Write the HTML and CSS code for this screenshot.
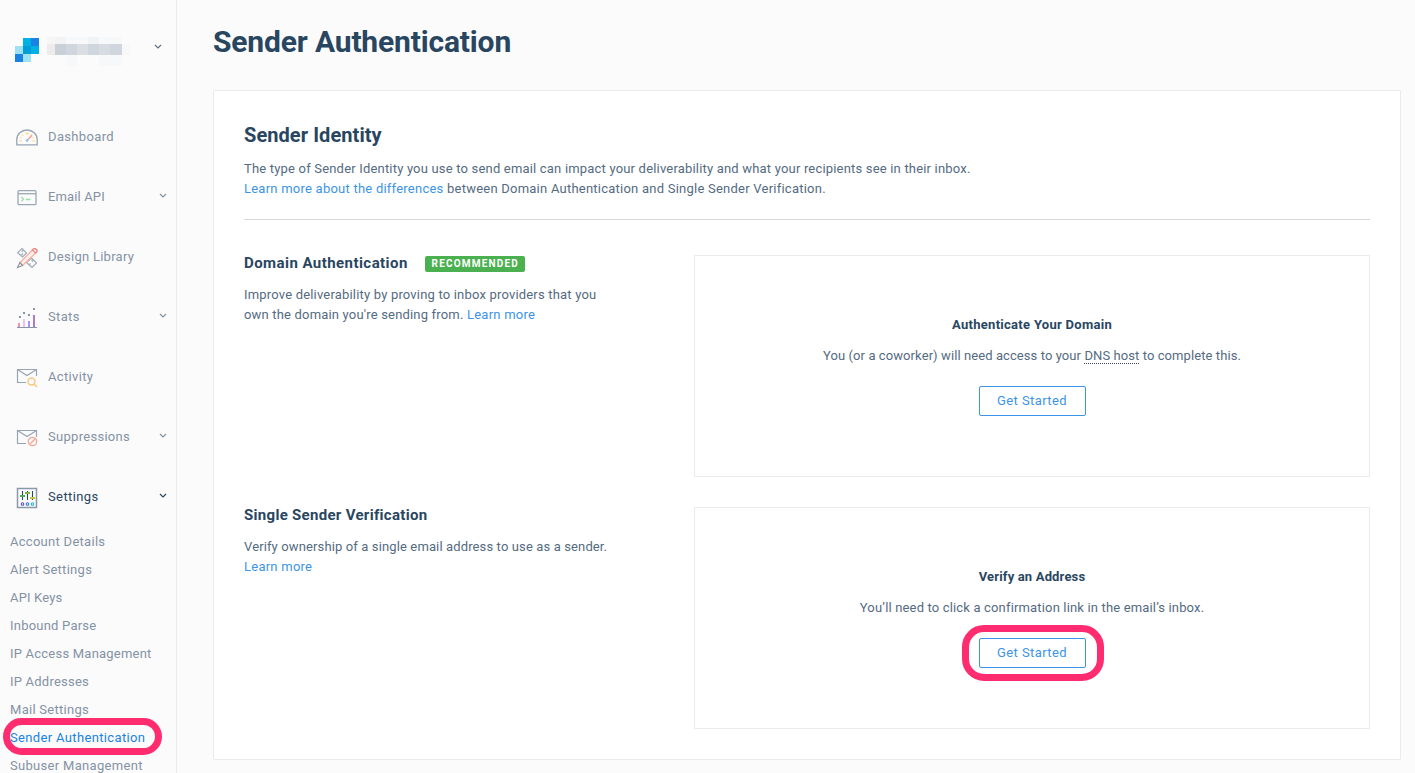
FILE: index.html
```html
<!DOCTYPE html>
<html lang="en">
<head>
<meta charset="utf-8">
<title>Sender Authentication</title>
<link rel="stylesheet" href="styles.css">
</head>
<body>
<div class="app">
  <aside class="sidebar">
    <div class="account">
      <svg class="logo" width="24" height="24" viewBox="0 0 24 24" shape-rendering="crispEdges">
        <path fill="#00b2e3" d="M8 0h8v8H8zM16 8h8v8h-8z"/><path fill="#1a82e2" d="M16 0h8v8h-8zM0 16h8v8H0z"/><path fill="#9de1f3" d="M0 8h8v8H0zM8 16h8v8H8z"/><path fill="#009dd9" d="M8 8h8v8H8z"/>
      </svg>
      <svg class="account-name" width="84" height="29" viewBox="0 0 84 29" shape-rendering="crispEdges">
        <path fill="#f8f5f6" d="M0 0h8v7H0z"/><path fill="#f2f3f5" d="M8 0h11v7H8zM41 0h11v7H41z"/><path fill="#f7f8f9" d="M19 0h22v7H19zM52 0h23v7H52zM19 18h11v11H19zM52 18h23v11H52zM75 7h9v11h-9z"/>
        <path fill="#efebed" d="M0 7h8v11H0z"/><path fill="#c9d0d8" d="M8 7h11v11H8z"/><path fill="#d0d6dd" d="M19 7h11v11H19zM41 7h11v11H41zM63 7h12v11H63z"/><path fill="#dbdfe4" d="M30 7h11v11H30z"/><path fill="#d7dce2" d="M52 7h11v11H52z"/>
      </svg>
      <svg class="chevron account-chevron" width="8" height="6" viewBox="0 0 8 6"><path d="M1 1l3 3 3-3"/></svg>
    </div>
    <nav class="nav">
      <a class="nav-item">
        <svg class="icon" width="22" height="22" viewBox="0 0 22 22"><path d="M.8 17.800v-5.300a10.200 9.500 0 0 1 20.400 0v5.300z" stroke="#98a4b3" stroke-width="1.300"/><path d="M3.500 14h2M16.500 14h2" stroke="#ffe08a" stroke-width="1.300"/><path d="M4 10.500l1.500.5M6 7.500l1.200 1.200M16 7.500l-1.200 1.200M18 10.500l-1.500.5" stroke="#ffe39a" stroke-width="1.500"/><path d="M10 6.500h2.500" stroke="#ffdd75" stroke-width="2"/><path d="M11.500 13l4.500-4.700" stroke="#f7a08e" stroke-width="1.500"/><circle cx="11" cy="13.500" r="1.400" fill="#9dc3eb" stroke="none"/></svg>
        <span class="label l-dashboard">Dashboard</span>
      </a>
      <a class="nav-item">
        <svg class="icon" width="22" height="22" viewBox="0 0 22 22"><rect x="2" y="3.700" width="18" height="14" rx="1" stroke="#9ba7b5" stroke-width="1.300"/><path d="M2 6.700h18" stroke="#9ba7b5" stroke-width="1.300"/><path d="M5.500 10l2 2.200-2 2.200M10 12.500h4.500" stroke="#93dfa7" stroke-width="1.300"/></svg>
        <span class="label l-email">Email API</span>
        <svg class="chevron" width="8" height="6" viewBox="0 0 8 6"><path d="M1 1l3 3 3-3"/></svg>
      </a>
      <a class="nav-item">
        <svg class="icon" width="22" height="22" viewBox="0 0 22 22"><path d="M6 1.500l4.500 4.500-4 4L1.700 5.800zM15.500 11l5 5-4.500 4.500-5.500-5zM13 18l1.500-1.500M15.500 13l1.500 1.500M5.500 8l1.500-1.500M7 3.500l-1.300 1.300" stroke="#a0abb8" stroke-width="1.200"/><path d="M4 15.800L16.300 3q2-2.300 3.900-.7t-.5 3.700L6.500 18.500z" fill="#fdf0ed" stroke="#f8b0a2" stroke-width="1.300"/><path d="M4 15.500L1.500 20.500l5-2z" stroke="#8491a1"/><path d="M16.300 3q2-2.300 3.900-.7t-.5 3.700z" stroke="#ec8582" stroke-width="1.200"/></svg>
        <span class="label l-design">Design Library</span>
      </a>
      <a class="nav-item">
        <svg class="icon" width="22" height="22" viewBox="0 0 22 22" shape-rendering="crispEdges"><g stroke="none"><path fill="#8794a5" d="M1 20h20v1H1zM3 9h2v2H3zM7 5h2v2H7zM12 7h2v2h-2zM17 1h2v2h-2z"/><path fill="#f78db0" d="M2 16h2v4H2z"/><path fill="#e6c4ef" d="M7 12h2v8H7z"/><path fill="#a991f7" d="M12 14h2v6h-2z"/><path fill="#ad7bcb" d="M17 8h2v12h-2z"/></g></svg>
        <span class="label l-stats">Stats</span>
        <svg class="chevron" width="8" height="6" viewBox="0 0 8 6"><path d="M1 1l3 3 3-3"/></svg>
      </a>
      <a class="nav-item">
        <svg class="icon" width="22" height="22" viewBox="0 0 22 22"><path d="M10 15.500H1.500v-13h19V9M1.500 2.500L11 8.500l9.500-6" stroke="#98a4b3" stroke-width="1.200"/><circle cx="15.500" cy="14.500" r="3.500" stroke="#fbc67c" stroke-width="1.400"/><path d="M18 17l3 3" stroke="#fbc67c" stroke-width="1.400"/></svg>
        <span class="label l-activity">Activity</span>
      </a>
      <a class="nav-item">
        <svg class="icon" width="22" height="22" viewBox="0 0 22 22"><path d="M10 16.500H1.500v-13h19V10M1.500 3.500L11 9.500l9.500-6" stroke="#98a4b3" stroke-width="1.200"/><circle cx="16.500" cy="14.500" r="4.200" stroke="#f5a594" stroke-width="1.300"/><path d="M13.500 17.500l6-6" stroke="#f5a594" stroke-width="1.300"/></svg>
        <span class="label l-suppressions">Suppressions</span>
        <svg class="chevron" width="8" height="6" viewBox="0 0 8 6"><path d="M1 1l3 3 3-3"/></svg>
      </a>
      <a class="nav-item open">
        <svg class="icon" width="22" height="22" viewBox="0 0 22 22"><rect x="1.500" y="1.500" width="19" height="19" stroke="#8b98a9" stroke-width="1.500"/><path d="M6.500 4v9M11.500 4v9M16.500 4v9" stroke="#294661"/><path d="M4 9h5" stroke="#4caf50" stroke-width="2"/><path d="M9 6h5" stroke="#7cb342" stroke-width="2"/><path d="M14 11h5" stroke="#c0ca33" stroke-width="2"/><circle cx="6.500" cy="17" r="1.300" stroke="#5e50b5"/><circle cx="11.500" cy="17" r="1.300" stroke="#3078e0"/><circle cx="16.500" cy="17" r="1.300" stroke="#26b5d9"/></svg>
        <span class="label l-settings">Settings</span>
        <svg class="chevron" width="8" height="6" viewBox="0 0 8 6"><path d="M1 1l3 3 3-3"/></svg>
      </a>
    </nav>
    <nav class="subnav">
      <a class="s-account">Account Details</a>
      <a class="s-alert">Alert Settings</a>
      <a class="s-keys">API Keys</a>
      <a class="s-parse">Inbound Parse</a>
      <a class="s-access">IP Access Management</a>
      <a class="s-ip">IP Addresses</a>
      <a class="s-mail">Mail Settings</a>
      <a class="s-sender current">Sender Authentication<i class="ring ring-nav"></i></a>
      <a class="s-subuser">Subuser Management</a>
    </nav>
  </aside>
  <main class="main">
    <h1>Sender Authentication</h1>
    <section class="panel">
      <header class="intro">
        <h2>Sender Identity</h2>
        <p><span class="t-intro1">The type of Sender Identity you use to send email can impact your deliverability and what your recipients see in their inbox.</span><br><span class="t-intro2"><a>Learn more about the differences</a> between Domain Authentication and Single Sender Verification.</span></p>
      </header>
      <div class="option">
        <div class="about">
          <h3><span class="t-domain">Domain Authentication</span><span class="badge">Recommended</span></h3>
          <p><span class="t-improve">Improve deliverability by proving to inbox providers that you</span><br><span class="t-own">own the domain you're sending from. <a class="more">Learn more</a></span></p>
        </div>
        <div class="card">
          <h4 class="t-auth">Authenticate Your Domain</h4>
          <p class="t-you">You (or a coworker) will need access to your <span class="hint">DNS host</span> to complete this.</p>
          <button class="btn">Get Started</button>
        </div>
      </div>
      <div class="option">
        <div class="about">
          <h3><span class="t-single">Single Sender Verification</span></h3>
          <p><span class="t-verify">Verify ownership of a single email address to use as a sender.</span><br><a class="more">Learn more</a></p>
        </div>
        <div class="card">
          <h4 class="t-address">Verify an Address</h4>
          <p class="t-click">You’ll need to click a confirmation link in the email’s inbox.</p>
          <button class="btn">Get Started<i class="ring ring-btn"></i></button>
        </div>
      </div>
    </section>
  </main>
</div>
</body>
</html>
```
FILE: styles.css
```css
* { box-sizing: border-box; }
body { margin: 0; background: #fbfbfc; font: 13px/20px Roboto, "Liberation Sans", sans-serif; color: #546b81; letter-spacing: .35px; }
h1, h2, h3, h4, p { margin: 0; }
h1, h2, h3, h4 { color: #294661; font-weight: 700; }
a { color: #3c94e8; }

/* Sidebar */
.app { display: flex; height: 773px; overflow: hidden; }
.sidebar { flex: none; width: 177px; border-right: 1px solid #e9ecef; height: 773px; }
.account { display: flex; align-items: flex-start; height: 107px; padding: 37px 14px 0 15px; }
.logo { margin-top: 1px; }
.account-name { margin-left: 8px; }
.account-chevron { margin: 7px 0 0 auto; }
.chevron { fill: none; stroke: #8592a3; stroke-width: 1.200; }
.account-chevron { stroke: #5c7084; }
.open .chevron { stroke: #294661; }
.nav-item { display: flex; align-items: center; height: 60px; padding: 0 9px 0 16px; color: #8592a3; white-space: nowrap; }
.icon { flex: none; fill: none; stroke-width: 1.100; margin-top: 2px; }
.label { margin-left: 10px; }
.nav-item .chevron { margin: -3px 0 0 auto; }
.nav-item.open { color: #294661; }
.l-email { letter-spacing: .13px; }
.l-design { letter-spacing: .27px; }
.l-suppressions { letter-spacing: .29px; }
.l-settings { letter-spacing: .4px; }
.subnav { display: flex; flex-direction: column; padding-top: 1px; }
.subnav a { position: relative; flex: none; height: 28px; line-height: 28px; padding-left: 10px; color: #8592a3; white-space: nowrap; letter-spacing: .28px; }
.subnav .current { color: #1a82e2; letter-spacing: .35px; }
.subnav .s-keys { letter-spacing: .17px; }
.subnav .s-parse, .subnav .s-access, .subnav .s-ip { letter-spacing: .22px; }
.subnav .s-subuser { letter-spacing: .31px; }

/* Highlight rings */
.ring { position: absolute; border: 7px solid #ff2d6f; pointer-events: none; }
.ring-nav { left: 3px; top: -6px; width: 159px; height: 37px; border-radius: 19px; }
.ring-btn { left: -18px; top: -14px; width: 142px; height: 56px; border-radius: 22px; }

/* Content */
.main { flex: 1; padding: 21px 14px 0 36px; }
h1 { font-size: 30px; line-height: 42px; letter-spacing: -.16px; }
.panel { margin-top: 27px; height: 670px; background: #fff; border: 1px solid #e9ecef; border-radius: 1px; padding: 29px 30px 30px; }
.intro { height: 100px; border-bottom: 1px solid #d5d8dc; }
h2 { font-size: 20px; line-height: 30px; margin-bottom: 9px; letter-spacing: .07px; }
.intro p, .about p { white-space: nowrap; }
.option { display: flex; justify-content: space-between; margin-top: 35px; }
.option + .option { margin-top: 30px; }
.about h3 { display: flex; align-items: center; font-size: 15px; line-height: 16px; height: 16px; margin-bottom: 14px; }
.badge { margin: 2px 0 0 17px; width: 100px; height: 16px; border-radius: 2px; background: #4bb04f; color: #fff; font-size: 10px; line-height: 16px; letter-spacing: 1.200px; padding-left: 1px; text-align: center; text-transform: uppercase; }
.card { width: 676px; height: 222px; border: 1px solid #e9ecef; display: flex; flex-direction: column; align-items: center; padding-top: 59px; }
.card h4 { font-size: 13px; line-height: 20px; margin-bottom: 11px; }
.hint { border-bottom: 1px dotted #294661; }
.btn { position: relative; margin-top: 20px; width: 107px; height: 30px; padding: 0; border: 1px solid #3c94e8; border-radius: 2px; background: #fff; color: #3c94e8; font: inherit; letter-spacing: .4px; }

/* Tracking per line of copy */
.t-intro1 { letter-spacing: .187px; }
.t-intro2 { letter-spacing: .235px; }
.t-domain { letter-spacing: .44px; }
.t-improve { letter-spacing: .186px; }
.t-own { letter-spacing: .18px; }
.more { letter-spacing: .25px; }
.t-single { letter-spacing: .3px; }
.t-verify { letter-spacing: .128px; }
.t-auth { letter-spacing: .29px; }
.t-you { letter-spacing: .085px; }
.t-address { letter-spacing: .17px; }
.t-click { letter-spacing: .16px; }
```
